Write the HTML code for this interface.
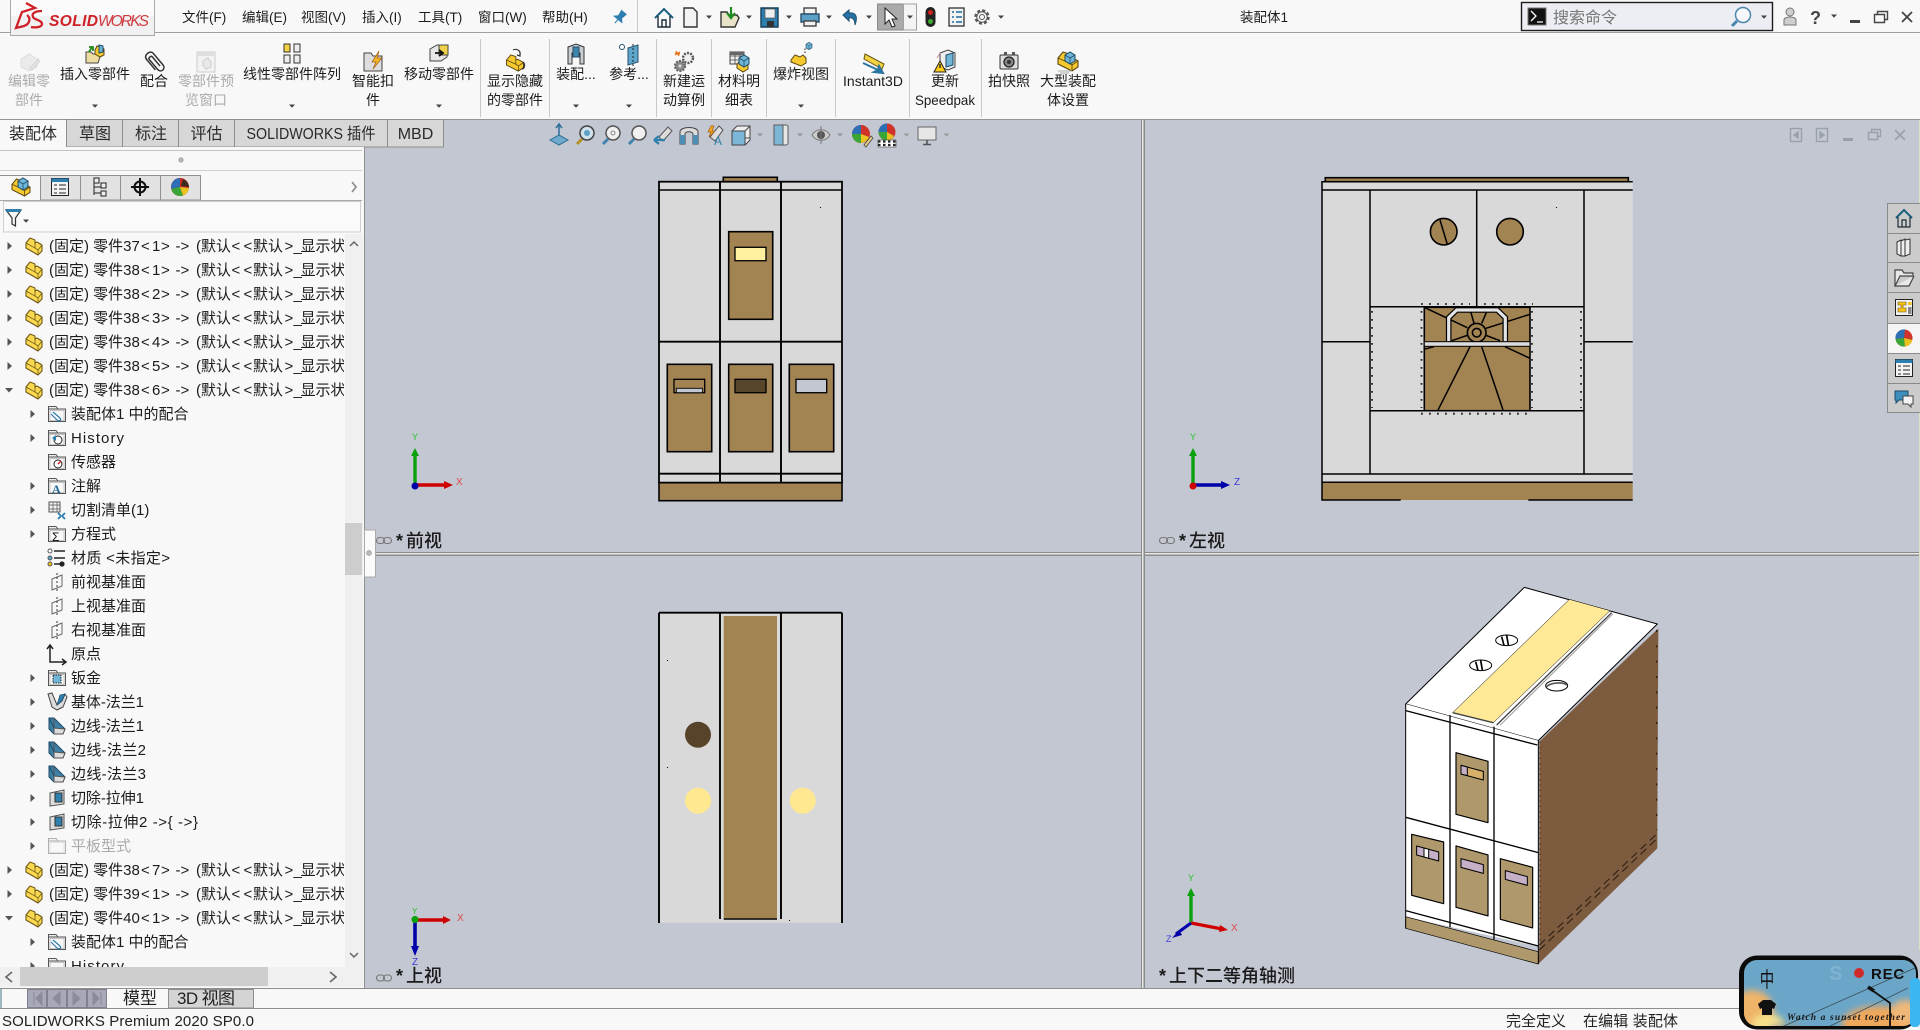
<!DOCTYPE html>
<html lang="zh"><head><meta charset="utf-8"><title>SOLIDWORKS</title>
<style>
html,body{margin:0;padding:0;background:#f8f8f8;width:1920px;height:1030px;overflow:hidden}
svg{display:block;position:absolute;left:0;top:0}
text{font-family:"Liberation Sans","Noto Sans CJK SC",sans-serif;fill:#1c1c1c}
.m{font-size:13.5px}
.r{font-size:14px;text-anchor:middle}
.g{fill:#ababab}
.t{font-size:16px;text-anchor:middle;fill:#2a2a2a}
.n{font-size:15px}
.b{fill:#d9d9d9;stroke:#000;stroke-width:1.6}
.p{fill:#a28352;stroke:#000;stroke-width:1.6}
.l{stroke:#000;stroke-width:1.5;fill:none}
.vl{font-size:18px;font-weight:500;fill:#1a1a1a}
.sep{stroke:#c8c8c8;stroke-width:1}
.dd{fill:#444}
.vd{fill:#9a9a9a}
</style></head><body>
<svg width="1920" height="1030" viewBox="0 0 1920 1030" xmlns="http://www.w3.org/2000/svg">
<defs>
<clipPath id="treeclip"><rect x="0" y="234" width="344" height="733"/></clipPath>
<clipPath id="recclip"><rect x="1744" y="960" width="172" height="66" rx="13"/></clipPath>
<filter id="bl" x="-30%" y="-30%" width="160%" height="160%"><feGaussianBlur stdDeviation="3.5"/></filter>
<g id="part"><path d="M-8,-3 L-4,-8 L1,-6 L1,-3 L3,-4 L8,-1 L8,5 L4,9 L-8,2 Z" fill="#fbd94f" stroke="#6e5a18" stroke-width="1.1" stroke-linejoin="round"/><path d="M-8,-3 L1,2 L1,-3 M1,2 L4,4 L8,-1 M4,4 L4,9" fill="none" stroke="#6e5a18" stroke-width=".8"/></g>
<g id="fold"><path d="M-8.5,-5 V-7.5 H-1 L1,-5 H8.5 V7.5 H-8.5 Z" fill="#ededed" stroke="#555" stroke-width="1"/><path d="M-8.5,-5 H8.5" stroke="#555"/><rect x="-7" y="-3.5" width="14" height="10" fill="#f8f8f8" stroke="#999" stroke-width=".5"/></g>
<g id="plane"><path d="M-5,-3 L5,-7 V4 L-5,8 Z" fill="none" stroke="#666" stroke-width="1"/><path d="M0,-9 V10" stroke="#333" stroke-dasharray="2 2" stroke-width="1"/></g>
<g id="sheet"><path d="M-8,-8 L-3,-8 L8,3 L6,8 L-3,8 L-8,3 Z" fill="#3d7fa5" stroke="#1f4a66"/><path d="M-3,-8 L-3,2 L8,3 L6,8 L-3,8 Z" fill="#dcdcdc" stroke="#555"/><path d="M-8,-8 L-3,2" stroke="#1f4a66"/></g>
<g id="cut"><path d="M-7,-5 L7,-8 V6 L-7,8 Z" fill="#ddd" stroke="#555"/><rect x="-2" y="-5" width="7" height="9" fill="#2f80ad" stroke="#333"/></g>
<g id="tr"><path d="M-2.5,-4 L2,0 L-2.5,4 Z" fill="#555"/></g>
<g id="td"><path d="M-4,-2 L4,-2 L0,2.5 Z" fill="#555"/></g>
<g id="dn"><path d="M-3,-1.5 H3 L0,1.8 Z" class="dd"/></g>
<g id="dv"><path d="M-3,-1.5 H3 L0,1.8 Z" class="vd"/></g>
<g id="blk"><path d="M-10,-3 L-5,-9 L1,-7 L1,-3 L3,-4 L10,0 L10,6 L4,10 L-10,3 Z" fill="#f6c92e" stroke="#5a4610" stroke-width="1.1"/><path d="M-10,-3 L1,2 V-3 M1,2 L4,4 L10,0 M4,4 V10" fill="none" stroke="#5a4610" stroke-width=".9"/></g>
<g id="cube"><path d="M-5,-3 L0,-6 L5,-3 V3 L0,6 L-5,3 Z" fill="#6fb6d8" stroke="#1f4a66" stroke-width="1"/><path d="M-5,-3 L0,0 L5,-3 M0,0 V6" fill="none" stroke="#1f4a66" stroke-width=".8"/></g>
</defs>

<!-- base -->
<rect x="0" y="0" width="1920" height="1030" fill="#f8f8f8"/>
<rect x="365" y="120" width="1555" height="868" fill="#c3c7d2"/>
<rect x="0" y="32" width="1920" height="1" fill="#a0a0a0"/>
<rect x="0" y="119" width="1920" height="1" fill="#949494"/>

<!-- logo -->
<rect x="10.5" y="-1" width="144" height="36.5" fill="#f1f1f1" stroke="#a8a8a8"/>
<rect x="11" y="0" width="143" height="16" fill="#fbfbfb"/>
<g stroke="#cf2027" fill="none" stroke-width="2.3">
<path d="M26,3 L35,8 L22,12 C20,17 18,23 16,28 L24,26 C30,24 31,18 27,15"/>
<path d="M42,11 C36,11 31,13 33,17 C34,20 42,20 42,24 C42,27 36,28 31,27"/>
</g>
<text x="49" y="26" style="font-size:15.5px;font-weight:700;font-style:italic;fill:#cf2027" textLength="49">SOLID</text>
<text x="98" y="26" style="font-size:15.5px;font-style:italic;fill:#cf3a40" textLength="51">WORKS</text>

<!-- menu -->
<text class="m" x="182" y="22">文件(F)</text>
<text class="m" x="242" y="22">编辑(E)</text>
<text class="m" x="301" y="22">视图(V)</text>
<text class="m" x="362" y="22">插入(I)</text>
<text class="m" x="418" y="22">工具(T)</text>
<text class="m" x="478" y="22">窗口(W)</text>
<text class="m" x="542" y="22">帮助(H)</text>
<g transform="translate(620,17) rotate(40)"><path d="M-3,-6 H3 L2,0 L5,3 H-5 L-2,0 Z M0,3 V8" fill="#2d7fb0" stroke="#2d7fb0"/></g>
<rect x="637" y="0" width="1" height="32" fill="#c9c9c9"/>

<!-- quick access -->
<g fill="none" stroke="#1c2c38" stroke-width="1.4">
<path d="M655,18 L664,9 L673,18" stroke="#1b5e80" stroke-width="2"/><path d="M658,16 V27 H670 V16 M662,27 V20 H666 V27"/>
<path d="M684,8 H693 L697,12 V27 H684 Z" fill="#f3f3f3" stroke="#333"/>
<path d="M721,27 V12 H727 L729,15 H737 L739,18 L735,27 Z" fill="#e7e2c8" stroke="#333"/>
<path d="M731,7 V16 M727,13 L731,18 L735,13" stroke="#1d8a1d" stroke-width="2.2"/>
<path d="M761,8 H778 V27 H761 Z" fill="#2f7fae" stroke="#163e58"/><rect x="765" y="9" width="10" height="9" fill="#efefef" stroke="#555" stroke-width=".7"/><rect x="767" y="21" width="7" height="6" fill="#333" stroke="none"/>
<rect x="804" y="8" width="12" height="6" fill="#f2f2f2" stroke="#444"/><rect x="801" y="14" width="18" height="8" fill="#5a9fc6" stroke="#274e66"/><rect x="804" y="21" width="12" height="5" fill="#f2f2f2" stroke="#444"/>
<path d="M843,15 L849,10 V13 C856,12 858,17 855,25 C855,19 852,17 849,18 V21 Z" fill="#2673a3" stroke="#1b4e6d" stroke-width="1"/>
</g>
<rect x="877.5" y="4" width="26" height="26" fill="#aaaaaa" stroke="#8a8a8a"/>
<rect x="903.5" y="4" width="13" height="26" fill="#f4f4f4" stroke="#a0a0a0"/>
<path d="M885,8 V24 L889,20 L892,27 L895,26 L892,19 L897,19 Z" fill="#fff" stroke="#222"/>
<rect x="925.5" y="7" width="10" height="20" rx="5" fill="#222"/><circle cx="930.5" cy="12.5" r="2.5" fill="#d02020"/><circle cx="930.5" cy="21.5" r="2.5" fill="#3cab30"/>
<rect x="949" y="8" width="15" height="18" fill="#f3f3f3" stroke="#222" stroke-width="1.2"/><path d="M952,12 H954 M956,12 H962 M952,17 H954 M956,17 H962 M952,22 H954 M956,22 H962" stroke="#1d6d9c" stroke-width="1.5"/>
<g transform="translate(982,17)"><circle r="6.5" fill="none" stroke="#555" stroke-width="2.4" stroke-dasharray="3 2.1"/><circle r="5.2" fill="none" stroke="#555"/><circle r="2.5" fill="none" stroke="#555"/></g>
<use href="#dn" x="709" y="17"/><use href="#dn" x="749" y="17"/><use href="#dn" x="789" y="17"/><use href="#dn" x="829" y="17"/><use href="#dn" x="869" y="17"/><use href="#dn" x="910" y="17"/><use href="#dn" x="1001" y="17"/>

<text class="m" x="1240" y="22">装配体1</text>

<!-- search -->
<rect x="1521.5" y="2.5" width="251" height="28" fill="#eceef3" stroke="#1c1c1c" stroke-width="1.4"/>
<rect x="1528" y="8" width="18" height="17" fill="#111" stroke="#777"/><path d="M1531,11 L1536,16 L1531,21 M1537,22 H1543" stroke="#fff" fill="none" stroke-width="1.3"/>
<text x="1553" y="23" style="font-size:16px;fill:#777">搜索命令</text>
<g fill="none" stroke="#4a86ad"><circle cx="1743" cy="15" r="7.5" stroke-width="1.5" fill="#f6f8fb"/><path d="M1737,21 L1732,26" stroke-width="3"/></g>
<use href="#dn" x="1764" y="17"/>
<circle cx="1790" cy="12" r="4" fill="#cfcfcf" stroke="#777"/><path d="M1784,25 V20 C1784,16 1796,16 1796,20 V25 Z" fill="#cfcfcf" stroke="#777"/>
<text x="1810" y="24" style="font-size:18px;font-weight:700;fill:#444">?</text>
<use href="#dn" x="1834" y="16"/>
<rect x="1850" y="20" width="10" height="3" fill="#444"/>
<path d="M1874.5,14.5 h10 v8 h-10 Z M1877.5,14 V11.5 h10 v8 h-3" fill="none" stroke="#444" stroke-width="1.4"/>
<path d="M1902,12 L1912,22 M1912,12 L1902,22" stroke="#444" stroke-width="1.8"/>

<!-- ribbon separators -->
<g class="sep"><path d="M480.5,39 V117 M549.5,39 V117 M656.5,39 V117 M711.5,39 V117 M766.5,39 V117 M835.5,39 V117 M909.5,39 V117 M981.5,39 V117"/></g>

<!-- ribbon icons -->
<g transform="translate(29,62)" opacity=".45"><path d="M-8,-3 L0,-8 L8,-3 V5 L0,9 L-8,5 Z" fill="#ddd" stroke="#bbb"/><path d="M1,6 L9,-3 L11,-1 L3,8 Z" fill="#ccc" stroke="#aaa"/></g>
<g transform="translate(95,54)"><path d="M-9,9 V-2 H-4 L-2,0 H3 L6,0 L3,9 Z" fill="#ecdca0" stroke="#444"/><path d="M-6,-2 L-3,-7 M-6,-7 H-2 V-3" stroke="#1d8a1d" stroke-width="1.8" fill="none"/><path d="M0,-4 L2,-8 L6,-7 L9,-5 V1 L5,3 L0,0 Z" fill="#f6c92e" stroke="#5a4610"/><path d="M4,-9 L8,-8 V-2 L4,-1 Z" fill="#6fb6d8" stroke="#1f4a66"/></g>
<g transform="translate(154,62) rotate(-40)" fill="none" stroke="#333" stroke-width="1.5"><path d="M-4,7 V-7 C-4,-12 5,-12 5,-7 V8 C5,13 -2,13 -2,8 V-5 C-2,-7 2,-7 2,-5 V7"/></g>
<g transform="translate(206,62)" opacity=".55"><rect x="-9" y="-10" width="18" height="20" fill="#eee" stroke="#aaa"/><rect x="-9" y="-10" width="18" height="4" fill="#ccc"/><path d="M-3,-1 L2,-4 L5,0 V5 L0,7 L-3,3 Z" fill="#ddd" stroke="#aaa"/></g>
<g transform="translate(292,53)" stroke="#333" stroke-width="1"><rect x="-8" y="-9" width="6" height="8" fill="#f4d43c"/><rect x="2" y="-9" width="6" height="8" fill="#eee"/><rect x="-8" y="2" width="6" height="8" fill="#eee"/><rect x="2" y="2" width="6" height="8" fill="#eee"/></g>
<g transform="translate(373,61)"><path d="M-9,10 V-8 H-2 L0,-5 H9 V10 Z" fill="#ddd" stroke="#444"/><path d="M6,-10 L-1,1 H3 L0,8 L9,-3 H4 Z" fill="#f4b82a" stroke="#a15c10" stroke-width=".7"/></g>
<g transform="translate(439,53)"><path d="M-9,-4 L-2,-8 H8 V4 L2,8 H-9 Z" fill="#e6e6e6" stroke="#444"/><path d="M0,-8 H9 V2 H0 Z" fill="#f0d24a" stroke="#444"/><path d="M-4,0 H3 M0,-3 L4,0 L0,3" stroke="#111" stroke-width="1.8" fill="none"/></g>
<g transform="translate(515,60)"><use href="#blk" transform="scale(.85)" y="3"/><path d="M-2,-10 C2,-12 6,-9 5,-5 M5,-8 L5,-4 L2,-5" fill="none" stroke="#333" stroke-width="1.2"/><path d="M8,2 C10,4 10,8 7,9" fill="none" stroke="#333" stroke-width="1.5"/></g>
<g transform="translate(576,55)"><path d="M-8,-8 L0,-11 L8,-8 V9 H4 V-2 H-4 V9 H-8 Z" fill="#c9cdd0" stroke="#333"/><rect x="-3" y="-8" width="6" height="10" fill="#3d86ad" stroke="#24506c"/></g>
<g transform="translate(629,55)"><circle cx="-7" cy="-8" r="2.5" fill="#fff" stroke="#24506c"/><path d="M-1,-7 L9,-10 V7 L-1,10 Z" fill="#5fa6cc" stroke="#24506c"/><path d="M4,-11 V12" stroke="#222" stroke-dasharray="2 2"/></g>
<g transform="translate(684,61)"><circle cx="4" cy="-3" r="5" fill="#eee" stroke="#555" stroke-width="2.4" stroke-dasharray="2 1.2"/><circle cx="-4" cy="5" r="5" fill="#888" stroke="#666" stroke-width="2.2" stroke-dasharray="2 1.2"/><circle cx="-4" cy="5" r="1.5" fill="#ddd"/><path d="M-8,-10 L-5,-5 M-9,-6 L-4,-9 M-9,-8 L-4,-7" stroke="#e46b10" stroke-width="1.2"/></g>
<g transform="translate(739,61)"><rect x="-9" y="-9" width="14" height="12" fill="#eee" stroke="#444"/><path d="M-9,-5 H5 M-9,-1 H5 M-4,-9 V3 M1,-9 V3" stroke="#444" stroke-width=".8"/><rect x="-9" y="-9" width="14" height="3" fill="#666"/><path d="M-2,3 L2,-1 L9,2 V8 L4,11 L-2,7 Z" fill="#f6c92e" stroke="#5a4610"/><use href="#cube" x="5" y="0"/></g>
<g transform="translate(801,56)"><path d="M-10,4 L-6,-1 L-1,1 L2,-1 L5,2 V7 L0,10 L-10,6 Z" fill="#f6c92e" stroke="#5a4610"/><path d="M4,-3 V-8 H7" stroke="#222" stroke-dasharray="1.5 1.5" fill="none"/><use href="#cube" transform="translate(8,-10) scale(.6)"/></g>
<g transform="translate(873,61)"><path d="M-8,-7 L11,3 L9,8 L-9,-2 Z" fill="#f2d23e" stroke="#6a5a18"/><path d="M-10,2 L5,9 M5,9 L1,11 L10,12 L6,5 Z" fill="#2a76a3" stroke="#2a76a3" stroke-width="2"/></g>
<g transform="translate(945,61)"><path d="M-5,-8 L3,-11 L10,-8 V6 L3,9 L-5,6 Z" fill="#eee" stroke="#444"/><path d="M1,-6 L8,-8 V4 L1,6 Z" fill="#6fb6d8" stroke="#1f4a66"/><path d="M-5,-8 L-8,-3" stroke="#c99" /><path d="M-5,0 L1,11 H-11 Z" fill="#ffcd1a" stroke="#222"/><path d="M-5,3 V7" stroke="#222" stroke-width="1.4"/></g>
<g transform="translate(1009,61)"><rect x="-9" y="-6" width="18" height="14" rx="1" fill="#ddd" stroke="#333"/><rect x="-5" y="-9" width="3" height="3" fill="#555"/><rect x="3" y="-9" width="3" height="3" fill="#555"/><circle cy="1" r="5" fill="#888" stroke="#222" stroke-width="1.3"/><circle cy="1" r="2" fill="#333"/></g>
<g transform="translate(1068,61)"><use href="#blk"/><use href="#cube" x="2" y="-3"/><path d="M-10,10 H4 M-8,12 H1" stroke="#aaa"/></g>

<!-- ribbon labels -->
<text class="r g" x="29" y="86">编辑零</text><text class="r g" x="29" y="105">部件</text>
<text class="r" x="95" y="79">插入零部件</text>
<text class="r" x="154" y="86">配合</text>
<text class="r g" x="206" y="86">零部件预</text><text class="r g" x="206" y="105">览窗口</text>
<text class="r" x="292" y="79">线性零部件阵列</text>
<text class="r" x="373" y="86">智能扣</text><text class="r" x="373" y="105">件</text>
<text class="r" x="439" y="79">移动零部件</text>
<text class="r" x="515" y="86">显示隐藏</text><text class="r" x="515" y="105">的零部件</text>
<text class="r" x="576" y="79">装配...</text>
<text class="r" x="629" y="79">参考...</text>
<text class="r" x="684" y="86">新建运</text><text class="r" x="684" y="105">动算例</text>
<text class="r" x="739" y="86">材料明</text><text class="r" x="739" y="105">细表</text>
<text class="r" x="801" y="79">爆炸视图</text>
<text class="r" x="873" y="86">Instant3D</text>
<text class="r" x="945" y="86">更新</text><text class="r" x="945" y="105" textLength="60" lengthAdjust="spacingAndGlyphs">Speedpak</text>
<text class="r" x="1009" y="86">拍快照</text>
<text class="r" x="1068" y="86">大型装配</text><text class="r" x="1068" y="105">体设置</text>
<use href="#dn" x="95" y="106"/><use href="#dn" x="292" y="106"/><use href="#dn" x="439" y="106"/><use href="#dn" x="576" y="106"/><use href="#dn" x="629" y="106"/><use href="#dn" x="801" y="106"/>

<!-- tabs -->
<rect x="0" y="120" width="66" height="27" fill="#f8f8f8"/>
<g fill="#d7d7d7" stroke="#8e8e8e"><rect x="66.5" y="119.5" width="56" height="27.5"/><rect x="122.5" y="119.5" width="56" height="27.5"/><rect x="178.5" y="119.5" width="56" height="27.5"/><rect x="234.5" y="119.5" width="153" height="27.5"/><rect x="387.5" y="119.5" width="56" height="27.5"/></g>
<text class="t" x="33" y="139">装配体</text><text class="t" x="95" y="139">草图</text><text class="t" x="151" y="139">标注</text><text class="t" x="206.5" y="139">评估</text><text class="t" x="311" y="139" textLength="129" lengthAdjust="spacingAndGlyphs">SOLIDWORKS 插件</text><text class="t" x="415.5" y="139">MBD</text>

<!-- left panel -->
<rect x="0" y="147" width="364" height="841" fill="#f8f8f8"/>
<rect x="364" y="147" width="1" height="841" fill="#8e8e8e"/>
<rect x="0" y="150" width="362" height="1" fill="#c4c4c4"/>
<rect x="0" y="170" width="362" height="1" fill="#d0d0d0"/>
<circle cx="181" cy="160" r="2.2" fill="#bbb" stroke="#888" stroke-width=".6"/>
<g fill="#e2e2e2" stroke="#909090"><rect x="40.5" y="175.5" width="40" height="24.5"/><rect x="80.5" y="175.5" width="40" height="24.5"/><rect x="120.5" y="175.5" width="40" height="24.5"/><rect x="160.5" y="175.5" width="40" height="24.5"/></g>
<rect x="0" y="175.5" width="40.5" height="25" fill="#f8f8f8"/><path d="M0,175.5 H40.5 V200" fill="none" stroke="#909090"/>
<rect x="0" y="200" width="362" height="1" fill="#a8a8a8"/>
<g transform="translate(21,187)"><use href="#blk" transform="scale(.9)"/><use href="#cube" x="2" y="-3"/></g>
<g transform="translate(60,187)"><rect x="-8.5" y="-8.5" width="17" height="17" fill="#f4f4f4" stroke="#222"/><rect x="-8.5" y="-8.5" width="17" height="3.5" fill="#2d7fb0"/><path d="M-6,-2 H-3 M-1,-2 H6 M-6,2 H-3 M-1,2 H6 M-6,6 H-3 M-1,6 H6" stroke="#222"/></g>
<g transform="translate(100,187)" fill="#eee" stroke="#222"><rect x="-6" y="-9" width="5" height="5"/><rect x="1" y="-4" width="5" height="5"/><rect x="1" y="4" width="5" height="5"/><path d="M-6,-4 V8 M-6,0 H1 M-6,6 H1" fill="none"/></g>
<g transform="translate(140,187)" fill="none" stroke="#111" stroke-width="2"><circle r="5.5"/><path d="M0,-9 V9 M-9,0 H9"/></g>
<g transform="translate(180,187)"><circle r="9" fill="#c9281f"/><path d="M0,0 L-8.7,2 A9,9 0 0 1 0,-9 Z" fill="#2c6fb5"/><path d="M0,0 L-8.7,2 A9,9 0 0 0 3,8.5 Z" fill="#3aa635"/><path d="M0,0 L3,8.5 A9,9 0 0 0 9,1 Z" fill="#e6c320"/><path d="M1,-1 L3,-8 A9,9 0 0 1 9,0 Z" fill="#3b2a20"/></g>
<path d="M352,182 L356,187 L352,192" stroke="#888" stroke-width="1.6" fill="none"/>
<rect x="3.5" y="201.5" width="357" height="30.5" fill="#fafafa" stroke="#cfcfcf"/>
<path d="M6,210 H21 L15.5,218 V226 L12,224 V218 Z" fill="#f4f4f4" stroke="#333" stroke-width="1.2"/><rect x="6" y="209" width="15" height="3" fill="#2d7fb0"/>
<use href="#dn" x="26" y="221"/>

<!-- tree -->
<rect x="345" y="234" width="18" height="733" fill="#f0f0f0"/>
<rect x="345" y="523" width="17" height="52" fill="#cdcdcd"/>
<path d="M350,246 L354,242 L358,246 M350,953 L354,957 L358,953" fill="none" stroke="#666" stroke-width="1.5"/>
<g clip-path="url(#treeclip)">
<g transform="translate(0,246)"><use href="#tr" x="10"/><use href="#part" x="34"/><text class="n" y="5"><tspan x="49">(固定) 零件37</tspan><tspan x="141">&lt;</tspan><tspan x="152">1</tspan><tspan x="161">&gt;</tspan><tspan x="175.5">-&gt;</tspan><tspan x="196">(默认</tspan><tspan x="231.5">&lt;</tspan><tspan x="243.5">&lt;</tspan><tspan x="253">默认</tspan><tspan x="284.5">&gt;</tspan><tspan x="293.5">_</tspan><tspan x="300.5">显示状态</tspan></text></g>
<g transform="translate(0,270)"><use href="#tr" x="10"/><use href="#part" x="34"/><text class="n" y="5"><tspan x="49">(固定) 零件38</tspan><tspan x="141">&lt;</tspan><tspan x="152">1</tspan><tspan x="161">&gt;</tspan><tspan x="175.5">-&gt;</tspan><tspan x="196">(默认</tspan><tspan x="231.5">&lt;</tspan><tspan x="243.5">&lt;</tspan><tspan x="253">默认</tspan><tspan x="284.5">&gt;</tspan><tspan x="293.5">_</tspan><tspan x="300.5">显示状态</tspan></text></g>
<g transform="translate(0,294)"><use href="#tr" x="10"/><use href="#part" x="34"/><text class="n" y="5"><tspan x="49">(固定) 零件38</tspan><tspan x="141">&lt;</tspan><tspan x="152">2</tspan><tspan x="161">&gt;</tspan><tspan x="175.5">-&gt;</tspan><tspan x="196">(默认</tspan><tspan x="231.5">&lt;</tspan><tspan x="243.5">&lt;</tspan><tspan x="253">默认</tspan><tspan x="284.5">&gt;</tspan><tspan x="293.5">_</tspan><tspan x="300.5">显示状态</tspan></text></g>
<g transform="translate(0,318)"><use href="#tr" x="10"/><use href="#part" x="34"/><text class="n" y="5"><tspan x="49">(固定) 零件38</tspan><tspan x="141">&lt;</tspan><tspan x="152">3</tspan><tspan x="161">&gt;</tspan><tspan x="175.5">-&gt;</tspan><tspan x="196">(默认</tspan><tspan x="231.5">&lt;</tspan><tspan x="243.5">&lt;</tspan><tspan x="253">默认</tspan><tspan x="284.5">&gt;</tspan><tspan x="293.5">_</tspan><tspan x="300.5">显示状态</tspan></text></g>
<g transform="translate(0,342)"><use href="#tr" x="10"/><use href="#part" x="34"/><text class="n" y="5"><tspan x="49">(固定) 零件38</tspan><tspan x="141">&lt;</tspan><tspan x="152">4</tspan><tspan x="161">&gt;</tspan><tspan x="175.5">-&gt;</tspan><tspan x="196">(默认</tspan><tspan x="231.5">&lt;</tspan><tspan x="243.5">&lt;</tspan><tspan x="253">默认</tspan><tspan x="284.5">&gt;</tspan><tspan x="293.5">_</tspan><tspan x="300.5">显示状态</tspan></text></g>
<g transform="translate(0,366)"><use href="#tr" x="10"/><use href="#part" x="34"/><text class="n" y="5"><tspan x="49">(固定) 零件38</tspan><tspan x="141">&lt;</tspan><tspan x="152">5</tspan><tspan x="161">&gt;</tspan><tspan x="175.5">-&gt;</tspan><tspan x="196">(默认</tspan><tspan x="231.5">&lt;</tspan><tspan x="243.5">&lt;</tspan><tspan x="253">默认</tspan><tspan x="284.5">&gt;</tspan><tspan x="293.5">_</tspan><tspan x="300.5">显示状态</tspan></text></g>
<g transform="translate(0,390)"><use href="#td" x="9"/><use href="#part" x="34"/><text class="n" y="5"><tspan x="49">(固定) 零件38</tspan><tspan x="141">&lt;</tspan><tspan x="152">6</tspan><tspan x="161">&gt;</tspan><tspan x="175.5">-&gt;</tspan><tspan x="196">(默认</tspan><tspan x="231.5">&lt;</tspan><tspan x="243.5">&lt;</tspan><tspan x="253">默认</tspan><tspan x="284.5">&gt;</tspan><tspan x="293.5">_</tspan><tspan x="300.5">显示状态</tspan></text></g>
<g transform="translate(0,414)"><use href="#tr" x="33"/><use href="#fold" x="57"/><path d="M53,-2 L60,4 C62,6 59,8 57,6 L51,0" fill="none" stroke="#2d7fb0" stroke-width="1.2"/><text class="n" x="71" y="5">装配体1 中的配合</text></g>
<g transform="translate(0,438)"><use href="#tr" x="33"/><use href="#fold" x="57"/><circle cx="58" cy="2" r="4" fill="#fff" stroke="#222"/><path d="M52,0 L56,-3 V3 Z" fill="#2d7fb0"/><text class="n" x="71" y="5" textLength="53">History</text></g>
<g transform="translate(0,462)"><use href="#fold" x="57"/><circle cx="58" cy="2" r="4" fill="#fff" stroke="#222"/><path d="M58,2 L61,-1" stroke="#c22" stroke-width="1.5"/><text class="n" x="71" y="5">传感器</text></g>
<g transform="translate(0,486)"><use href="#tr" x="33"/><use href="#fold" x="57"/><text x="52" y="7" style="font-size:12px;font-weight:700;fill:#1f6a94;font-family:'Liberation Serif',serif">A</text><text class="n" x="71" y="5">注解</text></g>
<g transform="translate(0,510)"><use href="#tr" x="33"/><rect x="49" y="-8" width="11" height="10" fill="#f2f2f2" stroke="#555"/><path d="M49,-5 H60 M49,-1 H60 M53,-8 V2 M57,-8 V2" stroke="#555" stroke-width=".7"/><path d="M58,3 L61,6 M65,3 L62,6 M58,9 L61,6 M65,9 L62,6" stroke="#2d7fb0" stroke-width="1.8"/><text class="n" x="71" y="5">切割清单(1)</text></g>
<g transform="translate(0,534)"><use href="#tr" x="33"/><use href="#fold" x="57"/><text x="52" y="7" style="font-size:12px;fill:#111">Σ</text><text class="n" x="71" y="5">方程式</text></g>
<g transform="translate(0,558)"><circle cx="50" cy="-7" r="2" fill="#fff" stroke="#555"/><circle cx="50" cy="0" r="2" fill="#5aa7d2" stroke="#555"/><circle cx="50" cy="6" r="2" fill="#f2c81e" stroke="#555"/><path d="M54,-7 H65 M54,0 H65 M54,6 H60" stroke="#222" stroke-width="1.5"/><circle cx="62" cy="6" r="2.6" fill="#222"/><text class="n" x="71" y="5" textLength="99">材质 &lt;未指定&gt;</text></g>
<g transform="translate(0,582)"><use href="#plane" x="57"/><text class="n" x="71" y="5">前视基准面</text></g>
<g transform="translate(0,606)"><use href="#plane" x="57"/><text class="n" x="71" y="5">上视基准面</text></g>
<g transform="translate(0,630)"><use href="#plane" x="57"/><text class="n" x="71" y="5">右视基准面</text></g>
<g transform="translate(0,654)"><path d="M50,-8 V8 H65 M47,-5 L50,-9 L53,-5 M62,5 L66,8 L62,11" fill="none" stroke="#222" stroke-width="1.5"/><text class="n" x="71" y="5">原点</text></g>
<g transform="translate(0,678)"><use href="#tr" x="33"/><use href="#fold" x="57"/><rect x="53" y="-3" width="8" height="8" fill="#6fb6d8" stroke="#222" stroke-dasharray="1.5 1"/><text class="n" x="71" y="5">钣金</text></g>
<g transform="translate(0,702)"><use href="#tr" x="33"/><path d="M48,-8 L52,-9 L57,3 L62,-1 L65,-8 L67,-5 L63,5 L57,8 L52,5 Z" fill="#dcdcdc" stroke="#444"/><path d="M57,3 L62,-1 L65,-8 L60,-7 Z" fill="#2f80ad" stroke="#1f4a66" stroke-width=".7"/><text class="n" x="71" y="5" textLength="73">基体-法兰1</text></g>
<g transform="translate(0,726)"><use href="#tr" x="33"/><use href="#sheet" x="57"/><text class="n" x="71" y="5" textLength="73">边线-法兰1</text></g>
<g transform="translate(0,750)"><use href="#tr" x="33"/><use href="#sheet" x="57"/><text class="n" x="71" y="5" textLength="75">边线-法兰2</text></g>
<g transform="translate(0,774)"><use href="#tr" x="33"/><use href="#sheet" x="57"/><text class="n" x="71" y="5" textLength="75">边线-法兰3</text></g>
<g transform="translate(0,798)"><use href="#tr" x="33"/><use href="#cut" x="57"/><text class="n" x="71" y="5" textLength="73">切除-拉伸1</text></g>
<g transform="translate(0,822)"><use href="#tr" x="33"/><use href="#cut" x="57"/><text class="n" x="71" y="5" textLength="127">切除-拉伸2 -&gt;{ -&gt;}</text></g>
<g transform="translate(0,846)"><use href="#tr" x="33"/><use href="#fold" x="57" opacity=".45"/><text class="n g" x="71" y="5">平板型式</text></g>
<g transform="translate(0,870)"><use href="#tr" x="10"/><use href="#part" x="34"/><text class="n" y="5"><tspan x="49">(固定) 零件38</tspan><tspan x="141">&lt;</tspan><tspan x="152">7</tspan><tspan x="161">&gt;</tspan><tspan x="175.5">-&gt;</tspan><tspan x="196">(默认</tspan><tspan x="231.5">&lt;</tspan><tspan x="243.5">&lt;</tspan><tspan x="253">默认</tspan><tspan x="284.5">&gt;</tspan><tspan x="293.5">_</tspan><tspan x="300.5">显示状态</tspan></text></g>
<g transform="translate(0,894)"><use href="#tr" x="10"/><use href="#part" x="34"/><text class="n" y="5"><tspan x="49">(固定) 零件39</tspan><tspan x="141">&lt;</tspan><tspan x="152">1</tspan><tspan x="161">&gt;</tspan><tspan x="175.5">-&gt;</tspan><tspan x="196">(默认</tspan><tspan x="231.5">&lt;</tspan><tspan x="243.5">&lt;</tspan><tspan x="253">默认</tspan><tspan x="284.5">&gt;</tspan><tspan x="293.5">_</tspan><tspan x="300.5">显示状态</tspan></text></g>
<g transform="translate(0,918)"><use href="#td" x="9"/><use href="#part" x="34"/><text class="n" y="5"><tspan x="49">(固定) 零件40</tspan><tspan x="141">&lt;</tspan><tspan x="152">1</tspan><tspan x="161">&gt;</tspan><tspan x="175.5">-&gt;</tspan><tspan x="196">(默认</tspan><tspan x="231.5">&lt;</tspan><tspan x="243.5">&lt;</tspan><tspan x="253">默认</tspan><tspan x="284.5">&gt;</tspan><tspan x="293.5">_</tspan><tspan x="300.5">显示状态</tspan></text></g>
<g transform="translate(0,942)"><use href="#tr" x="33"/><use href="#fold" x="57"/><path d="M53,-2 L60,4 C62,6 59,8 57,6 L51,0" fill="none" stroke="#2d7fb0" stroke-width="1.2"/><text class="n" x="71" y="5">装配体1 中的配合</text></g>
<g transform="translate(0,966)"><use href="#tr" x="33"/><use href="#fold" x="57"/><text class="n" x="71" y="5" textLength="53">History</text></g>
</g>
<!-- h scrollbar -->
<rect x="0" y="967" width="363" height="20" fill="#f0f0f0"/>
<rect x="20" y="967" width="248" height="19" fill="#cdcdcd"/>
<path d="M12,972 L6,977 L12,982 M330,972 L336,977 L330,982" fill="none" stroke="#666" stroke-width="1.6"/>

<!-- viewport dividers -->
<rect x="375" y="552" width="1545" height="4" fill="#8c8c8c"/><rect x="375" y="553" width="1545" height="1.5" fill="#e8e8e8"/>
<rect x="1141" y="120" width="4" height="868" fill="#8c8c8c"/><rect x="1142" y="120" width="1.5" height="868" fill="#e8e8e8"/>
<rect x="1919" y="120" width="1" height="830" fill="#d5e4c6"/>
<!-- splitter handle -->
<rect x="364.5" y="530" width="11" height="47" fill="#fbfbfb" stroke="#aaa"/>
<circle cx="369" cy="553" r="2.4" fill="#bbb" stroke="#888" stroke-width=".6"/>

<!-- view toolbar -->
<g transform="translate(559,135)"><path d="M0,-10 V4 M-3,-7 L0,-11 L3,-7" stroke="#2a6d96" stroke-width="1.5" fill="none"/><path d="M-9,5 L0,0 L9,5 L0,10 Z" fill="#6fa9cb" stroke="#2a6d96"/></g>
<g transform="translate(585,135)"><circle cx="2" cy="-2" r="7" fill="#cfe1ec" stroke="#444" stroke-width="1.5"/><circle cx="2" cy="-2" r="3" fill="#5d9fc6"/><path d="M-3,4 L-8,9" stroke="#b3922c" stroke-width="3"/></g>
<g transform="translate(611,135)"><circle cx="2" cy="-2" r="7" fill="#f0f0f0" stroke="#555" stroke-width="1.5"/><circle cx="2" cy="-2" r="2" fill="none" stroke="#888"/><path d="M-3,4 L-8,9" stroke="#3f85ad" stroke-width="3"/></g>
<g transform="translate(637,135)"><circle cx="2" cy="-2" r="7" fill="#f0f0f0" stroke="#555" stroke-width="1.5"/><path d="M-3,4 L-8,9" stroke="#3f85ad" stroke-width="3"/></g>
<g transform="translate(663,135)"><path d="M-4,2 L5,-8 L9,-4 L0,6 Z" fill="#ddd" stroke="#555"/><path d="M-9,5 H2 M-9,5 L-4,1 M-9,5 L-4,9" stroke="#2f80ad" stroke-width="2.2" fill="none"/></g>
<g transform="translate(689,135)"><path d="M-9,9 V-3 C-9,-9 9,-9 9,-3 V9 H4 V-1 C4,-4 -4,-4 -4,-1 V9 Z" fill="#dcdcdc" stroke="#444"/><path d="M-9,0 V9 H-4 V0 Z M4,0 V9 H9 V0 Z" fill="#4d8eb4"/></g>
<g transform="translate(715,135)"><path d="M-5,2 L4,-9 L8,-5 L0,6 Z" fill="#ddd" stroke="#555"/><path d="M-4,-9 L-7,-3 H-4 L-6,2 L0,-4 H-3 L-1,-9 Z" fill="#f2a920" stroke="#a25f14" stroke-width=".7"/><text x="-1" y="10" style="font-size:12px;fill:#2f80ad">A</text></g>
<g transform="translate(741,135)"><path d="M-9,-4 L-4,-9 H9 V5 L4,10 H-9 Z" fill="#eee" stroke="#444"/><rect x="-9" y="-4" width="13" height="14" fill="#7db7d8" stroke="#444"/><path d="M4,-4 L9,-9 M4,3 H9" stroke="#444"/></g>
<g transform="translate(781,135)"><rect x="-7" y="-10" width="14" height="20" rx="2" fill="#e6e6e6" stroke="#5a5a5a"/><rect x="-7" y="-10" width="9" height="20" fill="#7db7d8" stroke="#5a5a5a"/></g>
<g transform="translate(821,135)"><path d="M-9,0 C-5,-7 5,-7 9,0 C5,7 -5,7 -9,0 Z" fill="#ccc" stroke="#777"/><circle r="4" fill="#555"/><path d="M0,-9 V9" stroke="#777"/></g>
<g transform="translate(861,135)"><circle cy="-1" r="9" fill="#d0332a"/><path d="M0,-1 L-9,-1 A9,9 0 0 1 0,-10 Z" fill="#2c6fb5"/><path d="M0,-1 L-9,-1 A9,9 0 0 0 0,8 Z" fill="#3aa635"/><path d="M0,-1 V8 A9,9 0 0 0 8,2 Z" fill="#e6c320"/><path d="M3,10 L10,1 L12,3 L5,12 Z" fill="#e8d08a" stroke="#444" stroke-width=".8"/></g>
<g transform="translate(887,135)"><circle cy="-3" r="8.5" fill="#d0332a"/><path d="M0,-3 L-8.5,-3 A8.5,8.5 0 0 1 0,-11.5 Z" fill="#2c6fb5"/><path d="M0,-3 L-8.5,-3 A8.5,8.5 0 0 0 0,5.5 Z" fill="#3aa635"/><path d="M0,-3 V5.5 A8.5,8.5 0 0 0 7,1 Z" fill="#e6c320"/><rect x="-9" y="5" width="18" height="7" fill="#fff" stroke="#222" stroke-width=".5"/><path d="M-9,6.5 H9 M-9,10 H9" stroke="#222" stroke-width="2.2" stroke-dasharray="2.5 2.5"/></g>
<g transform="translate(927,135)"><rect x="-9" y="-8" width="18" height="13" fill="#e6e6e6" stroke="#666"/><path d="M0,5 V9 M-4,9.5 H4" stroke="#555" stroke-width="1.6"/></g>
<use href="#dv" x="760" y="135"/><use href="#dv" x="800" y="135"/><use href="#dv" x="840" y="135"/><use href="#dv" x="906.5" y="135"/><use href="#dv" x="946.5" y="135"/>

<!-- viewport window controls -->
<g fill="none" stroke="#9aa0a8" stroke-width="1.4">
<rect x="1790.5" y="128.5" width="11" height="13"/><rect x="1816.5" y="128.5" width="11" height="13"/>
<path d="M1794,135 L1798,132 V138 Z" fill="#9aa0a8"/><path d="M1824,135 L1820,132 V138 Z" fill="#9aa0a8"/>
<path d="M1868.5,132.5 h9 v7 h-9 Z M1871.5,132 V129.5 h9 v7 h-3"/>
<path d="M1895,130 L1905,140 M1905,130 L1895,140" stroke-width="1.6"/>
</g>
<rect x="1843" y="138" width="10" height="3" fill="#9aa0a8"/>

<!-- FRONT VIEW -->
<g>
<rect class="p" x="723.3" y="177.3" width="54" height="5"/>
<rect class="b" x="659" y="181.7" width="183" height="301" style="stroke-width:1.8"/>
<rect class="p" x="659" y="482.7" width="183" height="18"/>
<path class="l" d="M659,190 H842"/>
<path class="l" style="stroke-width:1.9" d="M720,181.7 V482.7 M781,181.7 V482.7 M659,341.7 H842 M659,473.7 H842"/>
<rect class="p" x="728.7" y="231.7" width="44" height="87.6"/>
<rect x="735" y="247.3" width="31" height="13.4" fill="#fff0a0" stroke="#000" stroke-width="1.3"/>
<rect class="p" x="667.3" y="364.3" width="44.4" height="87.4"/>
<rect class="p" x="728.7" y="364.3" width="44" height="87.4"/>
<rect class="p" x="789.3" y="364.3" width="44.4" height="87.4"/>
<rect x="674" y="379.3" width="30.7" height="13.4" fill="#a28352" stroke="#000" stroke-width="1.3"/><rect x="676.3" y="388.3" width="26.3" height="4.4" fill="#c3c7d2" stroke="#000" stroke-width=".9"/>
<rect x="735" y="379.3" width="31" height="13.4" fill="#57452c" stroke="#000" stroke-width="1.3"/>
<rect x="796" y="379.3" width="30.7" height="13.4" fill="#c3c7d2" stroke="#000" stroke-width="1.3"/>
<rect x="820" y="207" width="1" height="1" fill="#000"/>
</g>

<!-- LEFT VIEW -->
<g>
<rect class="p" x="1325.3" y="177.7" width="303" height="4"/>
<rect x="1322" y="181.7" width="310.7" height="300.6" fill="#d9d9d9"/>
<rect x="1322" y="482.3" width="310.7" height="17.7" fill="#a28352"/>
<path class="l" d="M1632.7,181.7 H1322 V500 H1400.7 M1528.3,500 H1632.7 M1322,190 H1632.7 M1322,474 H1632.7 M1322,482.3 H1632.7 M1370,190 V474 M1584,190 V474 M1476.7,190 V306.7 M1370,306.7 H1584 M1370,410.7 H1584 M1322,341.7 H1370 M1584,341.7 H1632.7"/>
<circle class="p" cx="1443.7" cy="231.7" r="13.3"/><path class="l" d="M1440,220 L1447.3,244.3"/>
<circle class="p" cx="1510" cy="231.7" r="13.3"/>
<rect class="p" x="1424.3" y="307.3" width="105.7" height="103.4"/>
<path class="l" d="M1425,307.7 L1467.3,327.7 M1470.7,311.7 L1474,323.3 M1486.7,311.7 L1481.7,323.3 M1530,314.3 L1486,328.3 M1451.7,340.7 L1468.3,335 M1485,335 L1500,340.7 M1470,346.7 L1437.7,410.7 M1481.7,346.7 L1503.3,410.7 M1505,346.7 L1530,358.3 M1425,349 L1434,346.7"/>
<path d="M1448.7,341 V317.7 L1456.7,310 H1497.3 L1505.3,317.7 V341" fill="none" stroke="#000" stroke-width="5.6"/>
<path d="M1448.7,341 V317.7 L1456.7,310 H1497.3 L1505.3,317.7 V341" fill="none" stroke="#e3e3e3" stroke-width="3.2"/>
<circle class="p" cx="1476.7" cy="332.7" r="9.3"/><circle class="p" cx="1476.7" cy="332.7" r="4.3"/>
<rect x="1424.3" y="341.7" width="105.7" height="4.6" fill="#dcdcdc" stroke="#000" stroke-width="1"/>
<g fill="none" stroke="#222" stroke-width="1.8" stroke-dasharray="1.8 6.2">
<path d="M1421,304 H1470 M1484,304 H1533 M1421,413.7 H1533"/>
<path d="M1421.5,311 V408 M1532,311 V408 M1372,311 V408 M1581,311 V408"/>
</g>
<rect x="1556" y="207" width="1" height="1" fill="#000"/>
</g>

<!-- TOP VIEW -->
<g>
<rect x="659" y="612.7" width="183" height="310" fill="#d9d9d9"/>
<path class="l" style="stroke-width:1.9" d="M659,612.7 H842 M659,612.7 V923 M842,612.7 V923 M720,612.7 V919 M781,612.7 V919"/>
<rect x="723.7" y="616" width="53.3" height="302.3" fill="#a28352"/>
<path d="M723.7,919 H777" stroke="#000" stroke-width="1.4"/>
<circle cx="698" cy="734.7" r="13" fill="#57432a"/>
<circle cx="698" cy="800.7" r="13" fill="#ffe88f"/>
<circle cx="802.7" cy="800.7" r="13" fill="#ffe88f"/>
<rect x="667" y="660" width="1" height="1" fill="#000"/><rect x="667" y="767" width="1" height="1" fill="#000"/><rect x="789" y="920" width="1" height="1" fill="#000"/>
</g>

<!-- ISO VIEW -->
<g transform="translate(1380,570) scale(.33333)" stroke-linejoin="round">
<path d="M77,402 L433,52 L832,162 L475,512 Z" fill="#fff" stroke="#000" stroke-width="3"/>
<path d="M77,402 L475,512 V1130 L77,1040 Z" fill="#fff"/>
<path d="M478,515 L835,175 L832,790 L478,1125 Z" fill="#7d5b3f"/>
<path d="M478,1125 L832,790 V835 L475,1182 Z" fill="#7d5b3f"/>
<path d="M77,1040 L475,1145 V1182 L77,1075 Z" fill="#af996c" stroke="#000" stroke-width="2"/>
<path d="M77,402 V1075 M475,512 V1182" stroke="#000" stroke-width="3" fill="none"/>
<path d="M218,428 L568,88 L690,122 L340,458 Z" fill="#ffe896" stroke="#000" stroke-width="1.5"/>
<path d="M218,428 L340,458 M350,465 L695,128" stroke="#444" stroke-width="4" fill="none"/>
<path d="M360,466 L698,132" stroke="#999" stroke-width="3" fill="none"/>
<path d="M77,422 L472,525 M77,742 L475,848 M77,1022 L475,1128 M210,435 V1072 M342,470 V1108" stroke="#000" stroke-width="4" fill="none"/>
<path d="M478,1125 L832,790 M478,1140 L832,805" stroke="#2a1c10" stroke-width="3" stroke-dasharray="24 14" fill="none"/>
<path d="M480,515 V1125" stroke="#2a1c10" stroke-width="3" stroke-dasharray="4 12" fill="none"/>
<path d="M830,180 V780" stroke="#2a1c10" stroke-width="4" stroke-dasharray="6 40" fill="none"/>
<g fill="#af996c" stroke="#000" stroke-width="3.5">
<path d="M228,548 L324,574 V758 L228,733 Z"/>
<path d="M95,793 L191,816 V1001 L95,976 Z"/>
<path d="M228,828 L324,855 V1038 L228,1012 Z"/>
<path d="M361,866 L458,892 V1074 L361,1048 Z"/>
</g>
<g stroke="#000" stroke-width="3">
<path d="M243,586 L310,604 V630 L243,612 Z" fill="#d8b06a"/><path d="M243,586 L262,591 V617 L243,612 Z" fill="#c5b0c8"/>
<path d="M110,828 L176,846 V873 L110,855 Z" fill="#c5b0c8"/><path d="M132,834 L146,838 V865 L132,861 Z" fill="#fff"/>
<path d="M243,866 L310,884 V910 L243,892 Z" fill="#c5b0c8"/>
<path d="M376,902 L442,920 V946 L376,928 Z" fill="#c5b0c8"/>
</g>
<g fill="#fff" stroke="#000" stroke-width="3">
<ellipse cx="380" cy="211" rx="33" ry="16"/><ellipse cx="302" cy="286" rx="33" ry="16"/><ellipse cx="530" cy="347" rx="33" ry="16"/>
</g>
<path d="M365,200 L372,226 M380,196 L385,225 M287,275 L294,301 M302,271 L307,300" stroke="#000" stroke-width="5" fill="none"/>
<path d="M500,350 C510,338 550,335 560,345" stroke="#555" stroke-width="5" fill="none"/>
</g>

<!-- triads -->
<g>
<path d="M415,484 V452" stroke="#0ca00c" stroke-width="3.4"/><path d="M411,456 L415,448 L419,456 Z" fill="#0ca00c"/>
<path d="M415,485 H445" stroke="#d00000" stroke-width="3.4"/><path d="M444,481 L453,485 L444,489 Z" fill="#d00000"/>
<circle cx="415" cy="486" r="3.5" fill="#0000a8"/>
<text x="412" y="440" style="font-size:9px;fill:#25c025">Y</text><text x="456" y="485" style="font-size:10px;fill:#e04848">X</text>
</g>
<g>
<path d="M1193,484 V452" stroke="#0ca00c" stroke-width="3.4"/><path d="M1189,456 L1193,448 L1197,456 Z" fill="#0ca00c"/>
<path d="M1193,485 H1222" stroke="#0000a8" stroke-width="3.4"/><path d="M1221,481 L1230,485 L1221,489 Z" fill="#0000a8"/>
<circle cx="1193" cy="486" r="3.5" fill="#d00000"/>
<text x="1190" y="440" style="font-size:9px;fill:#25c025">Y</text><text x="1234" y="485" style="font-size:10px;fill:#3a3ad8">Z</text>
</g>
<g>
<path d="M415,920 H444" stroke="#d00000" stroke-width="3.4"/><path d="M443,916 L451,920 L443,924 Z" fill="#d00000"/>
<path d="M415,920 V948" stroke="#0000a8" stroke-width="3.6"/><path d="M411,946 L415,956 L419,946 Z" fill="#0000a8"/>
<circle cx="415" cy="919.5" r="3.6" fill="#0ca00c"/>
<text x="412" y="914" style="font-size:8px;fill:#25c025">Y</text><text x="457" y="921" style="font-size:10px;fill:#e04848">X</text><text x="412" y="965" style="font-size:10px;fill:#3a3ad8">Z</text>
</g>
<g>
<path d="M1191,922 V893" stroke="#0ca00c" stroke-width="3.4"/><path d="M1187,896 L1191,888 L1195,896 Z" fill="#0ca00c"/>
<path d="M1191,923 L1222,929" stroke="#d00000" stroke-width="3.2"/><path d="M1220,925 L1228,930 L1219,932 Z" fill="#d00000"/>
<path d="M1191,923 L1176,934" stroke="#0000a8" stroke-width="3.2"/><path d="M1179,930 L1172,938 L1182,935 Z" fill="#0000a8"/>
<text x="1188" y="881" style="font-size:9px;fill:#25c025">Y</text><text x="1231" y="931" style="font-size:10px;fill:#e04848">X</text><text x="1166" y="942" style="font-size:9px;fill:#3a3ad8">Z</text>
</g>

<!-- view labels -->
<g fill="none" stroke="#777" stroke-width="1.1"><rect x="376.5" y="537.5" width="8" height="6" rx="3"/><rect x="383.5" y="537.5" width="8" height="6" rx="3"/><rect x="1159.5" y="537.5" width="8" height="6" rx="3"/><rect x="1166.5" y="537.5" width="8" height="6" rx="3"/><rect x="376.5" y="975" width="8" height="6" rx="3"/><rect x="383.5" y="975" width="8" height="6" rx="3"/></g>
<text class="vl" y="547"><tspan x="396" style="font-weight:700">*</tspan><tspan x="406">前视</tspan></text>
<text class="vl" y="547"><tspan x="1179" style="font-weight:700">*</tspan><tspan x="1189">左视</tspan></text>
<text class="vl" y="982"><tspan x="396" style="font-weight:700">*</tspan><tspan x="406">上视</tspan></text>
<text class="vl" y="982"><tspan x="1159" style="font-weight:700">*</tspan><tspan x="1169">上下二等角轴测</tspan></text>

<!-- right task pane -->
<g fill="#cbcbcb" stroke="#8a8a8a"><rect x="1887.5" y="203.5" width="33" height="30"/><rect x="1887.5" y="233.5" width="33" height="29"/><rect x="1887.5" y="262.5" width="33" height="30"/><rect x="1887.5" y="292.5" width="33" height="31"/><rect x="1887.5" y="323.5" width="33" height="30" fill="#f5f5f5"/><rect x="1887.5" y="353.5" width="33" height="30"/><rect x="1887.5" y="383.5" width="33" height="29"/></g>
<path d="M1896,218 L1904,210 L1912,218" fill="none" stroke="#1b5e80" stroke-width="2"/><path d="M1898,217 V227 H1910 V217 M1902,227 V220 H1906 V227" fill="none" stroke="#1c2c38" stroke-width="1.2"/>
<g transform="translate(1904,248)" fill="#eee" stroke="#333"><path d="M-7,-6 L-3,-8 V8 L-7,6 Z"/><path d="M-3,-7 L1,-9 V8 L-3,8 Z"/><path d="M1,-8 L6,-9 V6 L1,8 Z"/></g>
<path d="M1895,286 V270 H1902 L1904,273 H1913 V276 H1900 L1895,286 H1909 L1914,276" fill="#e8e8e8" stroke="#444" stroke-width="1.2"/>
<g transform="translate(1904,308)"><rect x="-8.5" y="-8.5" width="17" height="16" fill="#f2f2f2" stroke="#222"/><path d="M-6,-6 H2 V-3 H-1 V0 H2 V4 H-6 V0 H-3 V-3 H-6 Z" fill="#f6c21a" stroke="#6a5010" stroke-width=".6"/><rect x="4" y="-1" width="3.5" height="7" fill="#888"/><rect x="4" y="-6" width="3.5" height="3" fill="#f6c21a"/></g>
<g transform="translate(1904,338)"><circle r="8.5" fill="#d0332a"/><path d="M0,0 L-8.5,1 A8.5,8.5 0 0 1 1,-8.5 Z" fill="#2c6fb5"/><path d="M0,0 L-8.5,1 A8.5,8.5 0 0 0 1,8.5 Z" fill="#3aa635"/><path d="M0,0 L1,8.5 A8.5,8.5 0 0 0 8.5,2 Z" fill="#e6c320"/></g>
<g transform="translate(1904,368)"><rect x="-8.5" y="-8.5" width="17" height="17" fill="#f4f4f4" stroke="#222"/><rect x="-8.5" y="-8.5" width="17" height="3.5" fill="#2d7fb0"/><path d="M-6,-2 H-3 M-1,-2 H6 M-6,2 H-3 M-1,2 H6 M-6,6 H-3 M-1,6 H6" stroke="#222"/></g>
<path d="M1895,391 H1908 V400 H1899 L1896,403 V400 H1895 Z" fill="#3d8fbd" stroke="#1f4a66"/><path d="M1903,396 H1913 V404 H1911 V407 L1908,404 H1903 Z" fill="#f3f3f3" stroke="#444"/>

<!-- bottom bars -->
<rect x="0" y="988" width="1920" height="1" fill="#8e8e8e"/>
<rect x="0" y="989" width="1920" height="19" fill="#f8f8f8"/>
<rect x="0" y="1008" width="1920" height="1" fill="#8e8e8e"/>
<rect x="0" y="1009" width="1920" height="21" fill="#f8f8f8"/>
<rect x="0" y="989" width="2" height="19" fill="#9fb8bd"/>
<g fill="#a7a8b8" stroke="#808090"><rect x="27.5" y="989.5" width="19" height="18"/><rect x="47.5" y="989.5" width="19" height="18"/><rect x="67.5" y="989.5" width="19" height="18"/><rect x="87.5" y="989.5" width="19" height="18"/></g>
<path d="M34,992 V1005 M42,992 L36,998.5 L42,1005 Z M60,992 L53,998.5 L60,1005 Z M73,992 L80,998.5 L73,1005 Z M93,992 L99,998.5 L93,1005 Z M101,992 V1005" fill="#8a8b9c" stroke="#8a8b9c"/>
<text x="123" y="1004" style="font-size:17px;fill:#222">模型</text>
<rect x="168.5" y="989.5" width="85" height="18.5" fill="#d4d4d4" stroke="#8e8e8e"/>
<text x="177" y="1004" style="font-size:17px;fill:#222" textLength="58">3D 视图</text>
<text x="2" y="1026" style="font-size:15px;fill:#222" textLength="252">SOLIDWORKS Premium 2020 SP0.0</text>
<text x="1506" y="1026" style="font-size:15px;fill:#222">完全定义</text>
<text x="1583" y="1026" style="font-size:15px;fill:#222" textLength="95">在编辑 装配体</text>

<!-- REC overlay -->
<rect x="1739" y="955.5" width="179" height="74" rx="18" fill="#0b0b0b"/>
<g clip-path="url(#recclip)">
<rect x="1744" y="960" width="172" height="66" fill="#6ba6c8"/>
<g filter="url(#bl)">
<ellipse cx="1752" cy="1012" rx="22" ry="22" fill="#efb468"/>
<ellipse cx="1768" cy="1024" rx="16" ry="10" fill="#f7e08a"/>
<ellipse cx="1878" cy="1024" rx="36" ry="18" fill="#f0a95c"/>
<ellipse cx="1905" cy="1012" rx="14" ry="12" fill="#f0b878"/>
<ellipse cx="1785" cy="1028" rx="16" ry="4" fill="#8fa09a"/>
</g>
<path d="M1775,1030 L1915,968 M1822,1030 L1908,988" stroke="#3a4c58" stroke-width=".8"/>
<path d="M1869,988 L1890,1003 V1030" fill="none" stroke="#111" stroke-width="1.8"/>
<path d="M1868,987 L1874,991" stroke="#111" stroke-width="3.5"/>
</g>
<text x="1829" y="980" style="font-size:20px;font-weight:700;fill:#7fb3d1">S</text>
<circle cx="1859" cy="973" r="5" fill="#cf2a2a"/>
<text x="1871" y="979" style="font-size:15px;font-weight:700;fill:#111;letter-spacing:.8px">REC</text>
<text transform="translate(1767,987) scale(.85,1.25)" x="0" y="0" style="font-size:17px;text-anchor:middle;fill:#111">中</text>
<path d="M1758,1004 L1763,1000 H1771 L1776,1004 L1774,1009 L1772,1008 V1015 H1762 V1008 L1760,1009 Z" fill="#111"/>
<text x="1787" y="1020" style="font-size:9.5px;font-style:italic;font-weight:700;font-family:'Liberation Serif',serif;fill:#1a1a1a" textLength="118">Watch a sunset together</text>
<rect x="1910" y="978" width="10" height="49" rx="4" fill="#3cb6f0"/>
</svg>
</body></html>
